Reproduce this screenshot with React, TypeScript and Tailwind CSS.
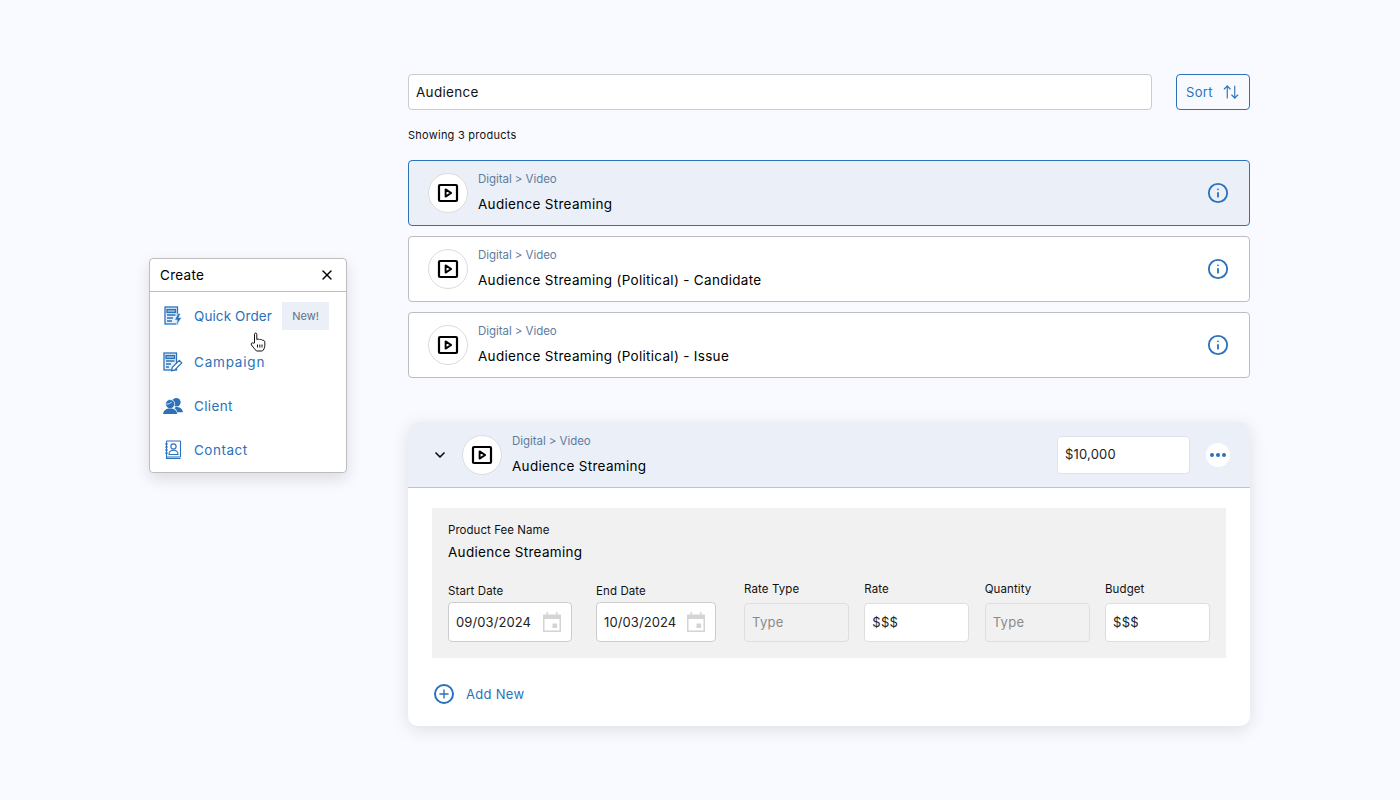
import { Info, X, ChevronDown, ArrowUpDown, Plus } from 'lucide-react';

const BLUE = 'text-[#2b72ba]';

const PlayIcon = () => (
  <svg width="22" height="20" viewBox="0 0 22 20" fill="none" stroke="#000" strokeWidth="2.2">
    <rect x="2" y="2" width="18" height="16" rx="1" />
    <path d="M8.6 6.4v7.2l5.6-3.6z" strokeWidth="1.9" strokeLinejoin="round" />
  </svg>
);

const QuickOrderIcon = () => (
  <svg width="18" height="20" viewBox="0 0 18 20" fill="none" stroke="#2b72ba" strokeWidth="1.3">
    <rect x="1" y="1" width="12.500" height="17" fill="#2b72ba" fillOpacity="0.12" />
    <rect x="3" y="3.500" width="8.500" height="3" fill="#2b72ba" fillOpacity="0.45" />
    <path d="M3 9h8.500M3 12h6M3 15h5" />
    <path d="M14 7.500l-3.500 6.500h2.800l-1 5.500 5.500-8h-3l1.800-4z" fill="#2b72ba" stroke="#fff" strokeWidth="0.6" />
  </svg>
);

const CampaignIcon = () => (
  <svg width="20" height="20" viewBox="0 0 20 20" fill="none" stroke="#2b72ba" strokeWidth="1.3">
    <rect x="1" y="1" width="12.500" height="17" fill="#2b72ba" fillOpacity="0.12" />
    <rect x="3" y="3.500" width="8.500" height="3" fill="#2b72ba" fillOpacity="0.45" />
    <path d="M3 9h8.500M3 12h5M3 15h3" />
    <path d="M8.500 18.800l.8-3.400 7-7 2.500 2.500-7 7z" fill="#fff" strokeLinejoin="round" />
  </svg>
);

const ClientIcon = () => (
  <svg width="21" height="18" viewBox="0 0 21 18" fill="#2b72ba">
    <circle cx="14" cy="5" r="4.500" />
    <path d="M14 10c3.500 0 6.500 1.700 7 5.500h-6c-.4-2-1.600-3.400-3-4.200.6-.8 1.200-1.300 2-1.300z" />
    <circle cx="7.500" cy="7" r="4.800" stroke="#fff" strokeWidth="0.8" />
    <path d="M0 17.500c.3-4 3.300-6 7.500-6s7.200 2 7.500 6z" />
    <path d="M3.500 7c2.200 0 4.500-.5 5.500-2.200" stroke="#fff" strokeWidth="0.8" fill="none" />
  </svg>
);

const ContactIcon = () => (
  <svg width="18" height="20" viewBox="0 0 18 20" fill="none" stroke="#2b72ba" strokeWidth="1.1">
    <rect x="2.500" y="1" width="14" height="16" rx="0.500" />
    <path d="M2.500 17v1.500h14" strokeWidth="1.200" />
    <path d="M1 4h3M1 7h3M1 10h3M1 13h3" />
    <circle cx="9.500" cy="6.500" r="2.600" />
    <path d="M5 14.500c0-3 2-4.200 4.500-4.200s4.500 1.200 4.500 4.200z" />
  </svg>
);

const CalendarIcon = () => (
  <svg width="18" height="20" viewBox="0 0 18 20" fill="#d4d4d4">
    <rect x="3.500" y="0" width="1.500" height="3" />
    <rect x="13" y="0" width="1.500" height="3" />
    <path d="M0 2.500h18v17.500h-18z M1.500 7v11.500h15v-11.500z" fillRule="evenodd" />
    <rect x="9.500" y="11.500" width="4.500" height="4.500" />
  </svg>
);

const HandCursor = () => (
  <svg width="16" height="20" viewBox="0 0 16 20" fill="#fff" stroke="#111" strokeWidth="1" strokeLinejoin="round" className="absolute left-[100px] top-[73px]">
    <path d="M4.500 11V2.200c0-1.500 2.300-1.500 2.300 0V7.500c1.500-.6 2.500-.4 3 .2 1-.4 2-.2 2.500.5 1-.2 2.500.3 2.500 2v3.500c0 2.500-1.500 4.500-2.500 5.300H6.500C5 17.500 3 15 1.500 13c-1-1.400.6-2.900 1.800-1.800z" />
    <path d="M7.500 12.500v3M9.800 12.500v3M12 12.500v3" strokeWidth="1" />
  </svg>
);

const MenuItem = ({ icon, label, tracking }: { icon: React.ReactNode; label: string; tracking: string }) => (
  <div className="flex h-[44px] items-center pl-[13px]">
    <div className="flex w-[20px] justify-center">{icon}</div>
    <span className={`ml-[11px] text-[13.500px] ${tracking} ${BLUE}`}>{label}</span>
  </div>
);

const ProductIcon = () => (
  <div className="flex h-[40px] w-[40px] shrink-0 items-center justify-center rounded-full border border-[#dcdcdc] bg-white">
    <PlayIcon />
  </div>
);

const ProductText = ({ title }: { title: string }) => (
  <div className="flex flex-col">
    <span className="text-[11.500px] leading-[16px] tracking-[-0.05px] text-[#5f7c9e]">Digital &gt; Video</span>
    <span className="mt-[8px] text-[13.500px] leading-[18px] tracking-[0.3px] text-black">{title}</span>
  </div>
);

const ProductRow = ({ title, selected }: { title: string; selected?: boolean }) => (
  <div
    className={`flex h-[66px] items-center rounded-[4px] border pl-[19px] pr-[20px] ${
      selected ? 'border-[#2b72ba] bg-[#ebf0f8]' : 'border-[#bdbdbd] bg-white'
    }`}
  >
    <ProductIcon />
    <div className="ml-[10px] -mt-[2px] flex-1">
      <ProductText title={title} />
    </div>
    <Info size={22} strokeWidth={2} className={BLUE} />
  </div>
);

const Field = ({
  label,
  value,
  width,
  disabled,
  date,
}: {
  label: string;
  value: string;
  width: string;
  disabled?: boolean;
  date?: boolean;
}) => (
  <div className={`flex shrink-0 flex-col ${width}`}>
    <span className={`text-[11.500px] leading-[16px] tracking-[0.1px] text-[#111] ${date ? 'mb-[3px]' : 'mb-[6px]'}`}>{label}</span>
    <div
      className={`flex items-center justify-between rounded-[4px] border pl-[7px] pr-[10px] text-[13px] ${
        date ? 'h-[40px] border-[#cccccc] tracking-[0.1px]' : 'h-[39px] border-[#dedede] tracking-[0.3px]'
      } ${disabled ? 'bg-[#f1f1f1] text-[#8a8a8a]' : 'bg-white text-[#222]'}`}
    >
      <span className="mt-px">{value}</span>
      {date && <CalendarIcon />}
    </div>
  </div>
);

export default function App() {
  return (
    <div className="flex min-h-[800px] items-start bg-[#f8faff] pl-[149px] pt-[74px] font-['Inter',sans-serif]">
      <div className="relative mt-[184px] w-[198px] rounded-[4px] border border-[#bdbdbd] bg-white shadow-[0_6px_16px_rgba(0,0,0,0.12)]">
        <div className="flex h-[33px] items-center justify-between border-b border-[#bdbdbd] pl-[10px] pr-[11px]">
          <span className="text-[13.500px] tracking-[0.3px] text-black">Create</span>
          <X size={16} strokeWidth={2} className="text-black" />
        </div>
        <div className="flex h-[48px] items-center pl-[13px] pr-[17px]">
          <div className="flex w-[20px] justify-center">
            <QuickOrderIcon />
          </div>
          <span className={`ml-[11px] flex-1 text-[13.500px] tracking-[0.1px] ${BLUE}`}>Quick Order</span>
          <div className="flex h-[28px] w-[47px] items-center justify-center bg-[#ebf0f8] text-[11px] text-[#5f6f82]">New!</div>
        </div>
        <MenuItem icon={<CampaignIcon />} label="Campaign" tracking="tracking-[0.8px]" />
        <MenuItem icon={<ClientIcon />} label="Client" tracking="tracking-[0.35px]" />
        <MenuItem icon={<ContactIcon />} label="Contact" tracking="tracking-[0.5px]" />
        <HandCursor />
      </div>

      <div className="ml-[61px] flex w-[842px] flex-col">
        <div className="flex items-center justify-between">
          <div className="flex h-[36px] w-[744px] items-center rounded-[4px] border border-[#cccccc] bg-white pl-[7px] text-[13.500px] tracking-[0.3px] text-[#111]">
            Audience
          </div>
          <div className={`flex h-[36px] w-[74px] items-center justify-between rounded-[4px] border border-[#2b72ba] pl-[9px] pr-[9px] text-[13px] tracking-[0.3px] ${BLUE}`}>
            <span className="mt-px">Sort</span>
            <ArrowUpDown size={18} strokeWidth={1.5} />
          </div>
        </div>

        <div className="mt-[17px] text-[11px] leading-[16px] tracking-[0.25px] text-[#111]">Showing 3 products</div>

        <div className="mt-[17px] flex flex-col gap-[10px]">
          <ProductRow title="Audience Streaming" selected />
          <ProductRow title="Audience Streaming (Political) - Candidate" />
          <ProductRow title="Audience Streaming (Political) - Issue" />
        </div>

        <div className="mt-[44px] h-[304px] overflow-hidden rounded-[10px] bg-white shadow-[0_4px_18px_rgba(0,0,0,0.11)]">
          <div className="flex h-[66px] items-center border-b border-[#bfc4ca] bg-[#ebf0f8] pl-[24px] pr-[20px]">
            <ChevronDown size={16} strokeWidth={2.6} className="text-[#111]" />
            <div className="ml-[14px]">
              <ProductIcon />
            </div>
            <div className="ml-[10px] -mt-[1px] flex-1">
              <ProductText title="Audience Streaming" />
            </div>
            <div className="flex h-[38px] w-[133px] items-center rounded-[4px] border border-[#dfe3e8] bg-white pl-[7px] text-[13px] tracking-[0.2px] text-[#222]">
              <span className="mt-px">$10,000</span>
            </div>
            <div className="ml-[16px] flex h-[24px] w-[24px] items-center justify-center gap-[2px] rounded-full bg-white">
              <span className="h-[4px] w-[4px] rounded-full bg-[#2b72ba]" />
              <span className="h-[4px] w-[4px] rounded-full bg-[#2b72ba]" />
              <span className="h-[4px] w-[4px] rounded-full bg-[#2b72ba]" />
            </div>
          </div>

          <div className="ml-[24px] mt-[20px] h-[150px] w-[794px] bg-[#f1f1f1] px-[16px] pt-[14px]">
            <div className="text-[11.500px] leading-[16px] tracking-[0.05px] text-[#111]">Product Fee Name</div>
            <div className="mt-[5px] text-[13.500px] leading-[18px] tracking-[0.3px] text-black">Audience Streaming</div>
            <div className="mt-[20px] flex items-end">
              <Field label="Start Date" value="09/03/2024" width="w-[124px]" date />
              <div className="ml-[24px]">
                <Field label="End Date" value="10/03/2024" width="w-[120px]" date />
              </div>
              <div className="ml-[28px] flex gap-[15.330px]">
                <Field label="Rate Type" value="Type" width="w-[105px]" disabled />
                <Field label="Rate" value="$$$" width="w-[105px]" />
                <Field label="Quantity" value="Type" width="w-[105px]" disabled />
                <Field label="Budget" value="$$$" width="w-[105px]" />
              </div>
            </div>
          </div>

          <div className="ml-[26px] mt-[26px] flex items-center">
            <div className="flex h-[20px] w-[20px] items-center justify-center rounded-full border-2 border-[#2b72ba]">
              <Plus size={14} strokeWidth={2.4} className={BLUE} />
            </div>
            <span className={`ml-[12px] mt-px text-[13px] tracking-[0.3px] ${BLUE}`}>Add New</span>
          </div>
        </div>
      </div>
    </div>
  );
}
